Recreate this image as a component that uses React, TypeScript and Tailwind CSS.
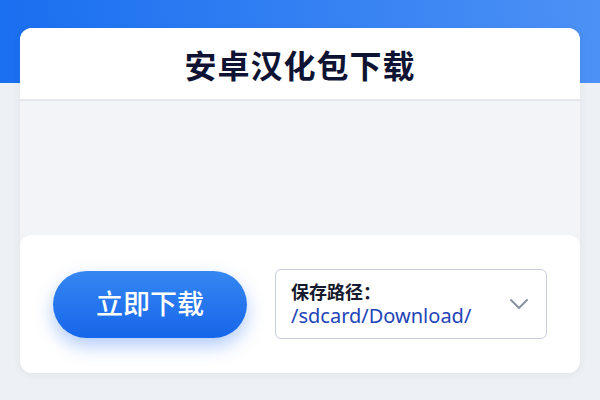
export default function App() {
  return (
    <div
      className="h-[400px] w-[600px] overflow-hidden bg-[#edf0f4] bg-[linear-gradient(90deg,#1a6ff0,#4c91f5)] bg-[length:100%_83px] bg-no-repeat pt-[28px] px-[20px]"
      style={{ fontFamily: '"Noto Sans", "Noto Sans CJK SC", sans-serif' }}
    >
      <div className="flex h-[345px] flex-col overflow-hidden rounded-xl bg-[#f2f4f7] shadow-[0_2px_10px_rgba(30,50,90,0.06)]">
        {/* title bar */}
        <div className="flex h-[73px] shrink-0 items-center justify-center border-b-2 border-[#e4e7ec] bg-white">
          <h1 className="mt-[4px] text-[32px] font-bold tracking-[1px] text-[#0e1333]">安卓汉化包下载</h1>
        </div>

        <div className="flex-1" />

        {/* download row */}
        <div className="flex h-[138px] shrink-0 items-center gap-[28px] rounded-xl bg-white px-[33px]">
          <button className="flex h-[67px] w-[194px] items-center justify-center rounded-full bg-[linear-gradient(180deg,#3587f2,#1666ea)] text-[27px] font-medium text-white shadow-[0_8px_18px_rgba(37,110,240,0.35)]">
            立即下载
          </button>

          <div className="flex h-[70px] flex-1 items-center rounded-md border border-[#c9cdd9] bg-white pl-[15px] pr-[16px]">
            <div className="flex flex-1 flex-col leading-none">
              <span className="text-[18px] font-bold text-[#161a2e]">保存路径：</span>
              <span className="mt-[5px] text-[20px] text-[#2244b8]">/sdcard/Download/</span>
            </div>
            <svg width="20" height="12" viewBox="0 0 20 12" fill="none" className="mr-[1px]">
              <path d="M2 2l8 8 8-8" stroke="#8b91a1" strokeWidth="2" strokeLinecap="round" strokeLinejoin="round" />
            </svg>
          </div>
        </div>
      </div>
    </div>
  )
}
